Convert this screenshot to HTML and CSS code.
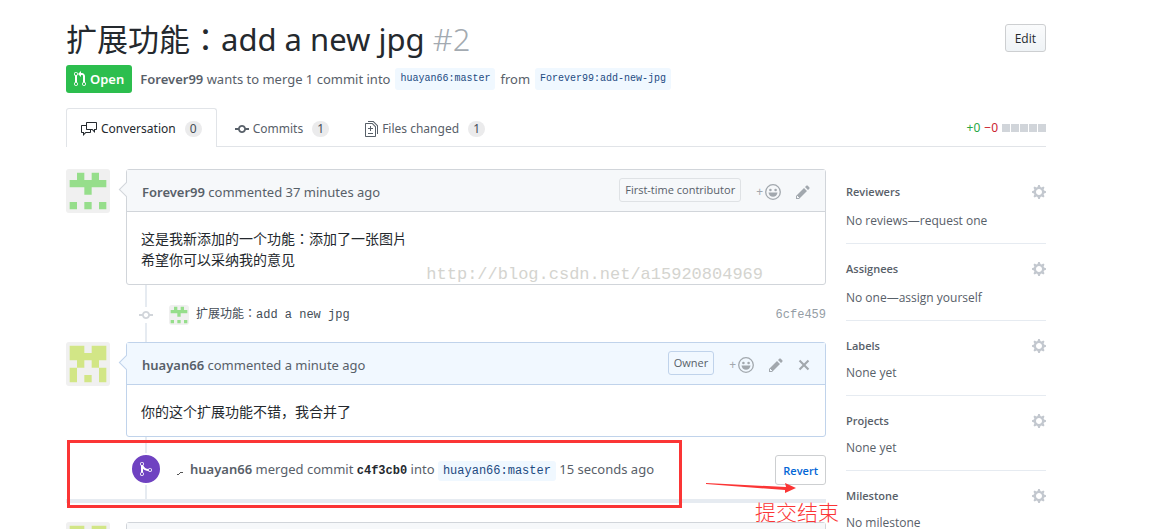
FILE: index.html
```html
<!DOCTYPE html>
<html lang="en">
<head>
  <meta charset="UTF-8">
  <title>扩展功能：add a new jpg #2</title>
  <link rel="stylesheet" href="styles.css">
</head>
<body>

<!-- Icons and avatars used more than once -->
<svg class="sprite" aria-hidden="true">
  <symbol id="commit" viewBox="0 0 14 16"><path d="M10.86 7c-.45-1.72-2-3-3.86-3-1.86 0-3.41 1.28-3.86 3H0v2h3.14c.45 1.72 2 3 3.86 3 1.86 0 3.41-1.28 3.86-3H14V7h-3.14zM7 10.2c-1.22 0-2.2-.98-2.2-2.2 0-1.22.98-2.2 2.2-2.2 1.22 0 2.2.98 2.2 2.2 0 1.22-.98 2.2-2.2 2.2z"/></symbol>
  <symbol id="pencil" viewBox="0 0 14 16"><path d="M0 12v3h3l8-8-3-3-8 8zm3 2H1v-2h1v1h1v1zm10.3-9.3L12 6 9 3l1.3-1.3a.996.996 0 0 1 1.41 0l1.59 1.59c.39.39.39 1.02 0 1.41z"/></symbol>
  <symbol id="smiley" viewBox="0 0 16 16"><circle cx="8" cy="8" r="7.3" fill="none" stroke="currentColor" stroke-width="1.3"/><circle cx="5.4" cy="6" r="1.3"/><circle cx="10.6" cy="6" r="1.3"/><path d="M3.5 8.5h9c-.3 2.7-2.1 4.3-4.5 4.3s-4.2-1.6-4.5-4.3z"/></symbol>
  <symbol id="gear" viewBox="0 0 14 16"><path d="M14 8.77v-1.6l-1.94-.64-.45-1.09.88-1.84-1.13-1.13-1.81.91-1.09-.45-.69-1.92h-1.6l-.63 1.94-1.11.45-1.84-.88-1.13 1.13.91 1.81-.45 1.09L0 7.23v1.59l1.94.64.45 1.09-.88 1.84 1.13 1.13 1.81-.91 1.09.45.69 1.92h1.59l.63-1.94 1.11-.45 1.84.88 1.13-1.13-.92-1.81.47-1.09L14 8.75v.02zM7 11c-1.66 0-3-1.34-3-3s1.34-3 3-3 3 1.34 3 3-1.34 3-3 3z"/></symbol>
  <symbol id="avatar-forever" viewBox="0 0 12 12"><path fill="#f0f0f0" d="M0 0h12v12H0z"/><path fill="#96de8b" d="M3 1h2v2h2V1h2v2h2v2H7v2H5V5H1V3h2zM1 9h2v2H1zM5 9h2v2H5zM9 9h2v2H9z"/></symbol>
  <symbol id="avatar-huayan" viewBox="0 0 12 12"><path fill="#f0f0f0" d="M0 0h12v12H0z"/><path fill="#d2e686" d="M1 1h4v2h2V1h4v4H9v2H7V5H5v2H3V5H1zM1 7h2v4H1zM9 7h2v4H9zM5 9h2v2H5z"/></symbol>
</svg>

<div class="page">
  <header class="pr-header">
    <div class="title-row">
      <h1>扩展功能：add a new jpg <span class="number">#2</span></h1>
      <button class="btn btn-edit" type="button">Edit</button>
    </div>
    <div class="meta">
      <span class="state">
        <svg width="12" height="16" viewBox="0 0 12 16"><path d="M11 11.28V5c-.03-.78-.34-1.47-.94-2.06C9.46 2.35 8.78 2.03 8 2H7V0L4 3l3 3V4h1c.27.02.48.11.69.31.21.2.3.42.31.69v6.28A1.993 1.993 0 0 0 10 15a1.993 1.993 0 0 0 1-3.72zm-1 2.92c-.66 0-1.2-.55-1.2-1.2 0-.65.55-1.2 1.2-1.2.65 0 1.2.55 1.2 1.2 0 .65-.55 1.2-1.2 1.2zM4 3c0-1.11-.89-2-2-2a1.993 1.993 0 0 0-1 3.72v6.56A1.993 1.993 0 0 0 2 15a1.993 1.993 0 0 0 1-3.72V4.72c.59-.34 1-.98 1-1.72zm-.8 10c0 .66-.55 1.2-1.2 1.2-.65 0-1.2-.55-1.2-1.2 0-.65.55-1.2 1.2-1.2.65 0 1.2.55 1.2 1.2zM2 4.2C1.34 4.2.8 3.65.8 3c0-.65.55-1.2 1.2-1.2.65 0 1.2.55 1.2 1.2 0 .65-.55 1.2-1.2 1.2z"/></svg>
        Open
      </span>
      <span><a class="author" href="#">Forever99</a> wants to merge 1 commit into</span>
      <a class="branch" href="#">huayan66:master</a>
      <span>from</span>
      <a class="branch" href="#">Forever99:add-new-jpg</a>
    </div>
  </header>

  <nav class="tabs">
    <a class="tab selected" href="#">
      <svg width="16" height="16" viewBox="0 0 16 16"><path d="M15 1H6c-.55 0-1 .45-1 1v2H1c-.55 0-1 .45-1 1v6c0 .55.45 1 1 1h1v3l3-3h4c.55 0 1-.45 1-1V9h1l3 3V9h1c.55 0 1-.45 1-1V2c0-.55-.45-1-1-1zM9 11H4.5L3 12.500V11H1V5h4v3c0 .55.45 1 1 1h3v2zm6-3h-2v1.500L11.500 8H6V2h9v6z"/></svg>
      Conversation <span class="counter">0</span>
    </a>
    <a class="tab" href="#">
      <svg width="14" height="16"><use href="#commit"/></svg>
      Commits <span class="counter">1</span>
    </a>
    <a class="tab" href="#">
      <svg width="13" height="16" viewBox="0 0 13 16"><path d="M6 7h2v1H6v2H5V8H3V7h2V5h1v2zm-3 6h5v-1H3v1zM7.5 2L11 5.500V15c0 .55-.45 1-1 1H1c-.55 0-1-.45-1-1V3c0-.55.45-1 1-1h6.500zM10 6L7 3H1v12h9V6zM8.500 0H3v1h5l4 4v8h1V4.500L8.500 0z"/></svg>
      Files changed <span class="counter">1</span>
    </a>
    <span class="diffstat">
      <span class="added">+0</span>
      <span class="deleted">−0</span>
      <span class="blocks"><i></i><i></i><i></i><i></i><i></i></span>
    </span>
  </nav>

  <div class="columns">
    <main class="discussion">
      <article class="entry">
        <svg class="avatar" width="44" height="44"><use href="#avatar-forever"/></svg>
        <div class="comment">
          <div class="comment-header">
            <p><a class="author" href="#">Forever99</a> commented 37 minutes ago</p>
            <span class="role">First-time contributor</span>
            <button class="icon-btn" type="button" aria-label="Add reaction"><span class="plus">+</span><svg width="16" height="16"><use href="#smiley"/></svg></button>
            <button class="icon-btn" type="button" aria-label="Edit comment"><svg width="14" height="16"><use href="#pencil"/></svg></button>
          </div>
          <div class="comment-body">这是我新添加的一个功能：添加了一张图片<br>希望你可以采纳我的意见</div>
          <span class="watermark">http://blog.csdn.net/a15920804969</span>
        </div>
      </article>

      <div class="commit-row">
        <span class="commit-mark"><svg width="14" height="16"><use href="#commit"/></svg></span>
        <svg class="avatar" width="20" height="20"><use href="#avatar-forever"/></svg>
        <a class="commit-title" href="#">扩展功能：add a new jpg</a>
        <a class="sha" href="#">6cfe459</a>
      </div>

      <article class="entry">
        <svg class="avatar" width="44" height="44"><use href="#avatar-huayan"/></svg>
        <div class="comment own">
          <div class="comment-header">
            <p><a class="author" href="#">huayan66</a> commented a minute ago</p>
            <span class="role">Owner</span>
            <button class="icon-btn" type="button" aria-label="Add reaction"><span class="plus">+</span><svg width="16" height="16"><use href="#smiley"/></svg></button>
            <button class="icon-btn" type="button" aria-label="Edit comment"><svg width="14" height="16"><use href="#pencil"/></svg></button>
            <button class="icon-btn" type="button" aria-label="Delete comment"><svg width="12" height="16" viewBox="0 0 12 16"><path d="M7.48 8l3.75 3.75-1.48 1.48L6 9.48l-3.75 3.75-1.48-1.48L4.52 8 .77 4.25l1.48-1.48L6 6.52l3.75-3.75 1.48 1.48z"/></svg></button>
          </div>
          <div class="comment-body">你的这个扩展功能不错，我合并了</div>
        </div>
      </article>

      <div class="merge-row">
        <span class="merge-badge"><svg width="12" height="16" viewBox="0 0 12 16"><path d="M10 7c-.73 0-1.38.41-1.73 1.02V8C7.22 7.98 6 7.64 5.14 6.98c-.75-.58-1.5-1.61-1.89-2.44A1.993 1.993 0 0 0 2 .99C.89.99 0 1.89 0 3a2 2 0 0 0 1 1.72v6.56c-.59.35-1 .99-1 1.72 0 1.11.89 2 2 2a1.993 1.993 0 0 0 1-3.72V7.67c.67.7 1.44 1.27 2.3 1.69.86.42 2.03.63 2.97.64v-.02c.36.61 1 1.02 1.73 1.02 1.11 0 2-.89 2-2 0-1.11-.89-2-2-2zm-6.8 6c0 .66-.55 1.2-1.2 1.2-.65 0-1.2-.55-1.2-1.2 0-.65.55-1.2 1.2-1.2.65 0 1.2.55 1.2 1.2zM2 4.2C1.34 4.2.8 3.65.8 3c0-.65.55-1.2 1.2-1.2.65 0 1.2.55 1.2 1.2 0 .65-.55 1.2-1.2 1.2zm8 6c-.66 0-1.2-.55-1.2-1.2 0-.65.55-1.2 1.2-1.2.65 0 1.2.55 1.2 1.2 0 .65-.55 1.2-1.2 1.2z"/></svg></span>
        <svg class="scribble" width="6" height="20" viewBox="0 0 6 20"><path d="M0 14.500h2M2 13.500h1M3 12.500h3" stroke="#555" fill="none"/></svg>
        <p><a class="author" href="#">huayan66</a> merged commit <a class="merge-sha" href="#">c4f3cb0</a> into <a class="branch" href="#">huayan66:master</a> 15 seconds ago</p>
        <button class="btn btn-revert" type="button">Revert</button>

        <!-- Annotations over the merge event -->
        <div class="highlight"></div>
        <svg class="arrow" width="90" height="12" viewBox="0 0 90 12"><path fill="#fb3535" d="M0 0l80 4-1-4 11 5-11 5v-3L0 1z"/></svg>
        <span class="note">提交结束</span>
      </div>

      <article class="entry">
        <svg class="avatar" width="44" height="44"><use href="#avatar-huayan"/></svg>
        <div class="comment"><div class="comment-header"></div></div>
      </article>
    </main>

    <aside class="sidebar">
      <section>
        <h2>Reviewers <button class="icon-btn" type="button" aria-label="Edit reviewers"><svg width="14" height="16"><use href="#gear"/></svg></button></h2>
        <p>No reviews—<a href="#">request one</a></p>
      </section>
      <section>
        <h2>Assignees <button class="icon-btn" type="button" aria-label="Edit assignees"><svg width="14" height="16"><use href="#gear"/></svg></button></h2>
        <p>No one—<a href="#">assign yourself</a></p>
      </section>
      <section class="short">
        <h2>Labels <button class="icon-btn" type="button" aria-label="Edit labels"><svg width="14" height="16"><use href="#gear"/></svg></button></h2>
        <p>None yet</p>
      </section>
      <section class="short">
        <h2>Projects <button class="icon-btn" type="button" aria-label="Edit projects"><svg width="14" height="16"><use href="#gear"/></svg></button></h2>
        <p>None yet</p>
      </section>
      <section class="short">
        <h2>Milestone <button class="icon-btn" type="button" aria-label="Edit milestone"><svg width="14" height="16"><use href="#gear"/></svg></button></h2>
        <p>No milestone</p>
      </section>
    </aside>
  </div>
</div>

</body>
</html>
```
FILE: styles.css
```css
* {
  box-sizing: border-box;
}

html {
  height: 100%;
  overflow: hidden;
}

body {
  height: 100%;
  margin: 0;
  overflow-y: auto;
  scrollbar-width: none;
  background: #fff;
  color: #24292e;
  font-family: "Noto Sans", "Noto Sans CJK TC", sans-serif;
  font-size: 13px;
  line-height: 20px;
}

a {
  color: inherit;
  text-decoration: none;
}

p {
  margin: 0;
}

svg {
  fill: currentColor;
  flex: none;
}

.sprite {
  position: absolute;
  width: 0;
  height: 0;
}

.page {
  padding: 18px 127px 0 66px;
}

/* Header */
.title-row {
  display: flex;
  justify-content: space-between;
  align-items: center;
  height: 40px;
}

h1 {
  margin: 0;
  padding-top: 2px;
  font-size: 31px;
  font-weight: 400;
  line-height: 40px;
}

.number {
  color: #a3aab1;
  font-weight: 300;
}

.btn {
  height: 30px;
  padding: 0 8px;
  border: 1px solid #cdcfd1;
  border-radius: 3px;
  background: #fff;
  font-family: "Open Sans", sans-serif;
  font-size: 12px;
  font-weight: 600;
}

.btn-edit {
  height: 28px;
  padding: 0 9px;
  background: linear-gradient(#fafbfc, #eff3f6);
  color: #24292e;
  font-weight: 500;
}

.btn-revert {
  margin-left: auto;
  padding: 0 7px;
  color: #0366d6;
  font-size: 11px;
}

.meta {
  display: flex;
  align-items: center;
  gap: 5px;
  margin-top: 7px;
  color: #586069;
}

.state {
  display: flex;
  align-items: center;
  gap: 4px;
  height: 28px;
  margin-right: 3px;
  padding: 0 8px;
  border-radius: 3px;
  background: #2cbe4e;
  color: #fff;
  font-weight: 600;
}

.author {
  color: #586069;
  font-weight: 600;
}

.branch {
  padding: 3px 5px;
  border-radius: 3px;
  background: #f0f8ff;
  color: #1c4a82;
  font-family: "Liberation Mono", monospace;
  font-size: 10px;
  line-height: 16px;
}

/* Tabs */
.tabs {
  display: flex;
  align-items: flex-end;
  margin-top: 15px;
  border-bottom: 1px solid #e1e4e8;
}

.tab {
  display: flex;
  align-items: center;
  gap: 4px;
  height: 39px;
  margin-bottom: -1px;
  padding: 2px 14px 0;
  border: 1px solid transparent;
  border-bottom: 0;
  color: #586069;
  font-size: 12px;
}

.tab + .tab {
  padding: 2px 17px 0;
}

.tab.selected {
  border-color: #e1e4e8;
  border-radius: 3px 3px 0 0;
  background: #fff;
  color: #24292e;
}

.counter {
  min-width: 17px;
  height: 16px;
  margin-left: 5px;
  border-radius: 8px;
  background: #ebebec;
  color: #444d56;
  font-size: 12px;
  line-height: 16px;
  text-align: center;
}

.diffstat {
  display: flex;
  align-items: center;
  gap: 4px;
  margin-left: auto;
  padding-bottom: 8px;
  font-size: 12px;
}

.added {
  color: #28a745;
}

.deleted {
  color: #cb2431;
}

.blocks {
  display: flex;
  gap: 1px;
}

.blocks i {
  width: 8px;
  height: 8px;
  background: #d1d5da;
}

/* Discussion */
.columns {
  display: grid;
  grid-template-columns: 1fr 200px;
  gap: 20px;
  margin-top: 22px;
}

.entry {
  display: flex;
  align-items: flex-start;
  gap: 16px;
}

.avatar {
  border-radius: 3px;
}

.comment {
  position: relative;
  flex: 1;
  border: 1px solid #d1d5da;
  border-radius: 3px;
}

.comment::before {
  content: "";
  position: absolute;
  top: 14px;
  left: -6px;
  width: 10px;
  height: 10px;
  border: 1px solid #d1d5da;
  border-top: 0;
  border-right: 0;
  background: #f6f8fa;
  transform: rotate(45deg);
}

.comment-header {
  position: relative;
  display: flex;
  align-items: center;
  gap: 15px;
  height: 42px;
  padding: 2px 15px 0;
  border-bottom: 1px solid #d1d5da;
  background: #f6f8fa;
  color: #586069;
}

.comment-header p {
  flex: 1;
}

.role {
  height: 24px;
  margin-bottom: 4px;
  padding: 0 5px;
  border: 1px solid #dfe2e5;
  border-radius: 3px;
  font-family: "Open Sans", sans-serif;
  font-size: 11px;
  line-height: 22px;
}

.own,
.own::before,
.own .comment-header {
  border-color: #c0d3eb;
}

.own::before,
.own .comment-header {
  background: #f1f8ff;
}

.own .role {
  border-color: #c0d3eb;
}

.icon-btn {
  display: flex;
  align-items: center;
  gap: 2px;
  padding: 0;
  border: 0;
  background: none;
  color: #a2a8ae;
  font-family: inherit;
}

.plus {
  font-size: 12px;
}

.comment-body {
  padding: 16px 14px 14px;
  font-size: 14px;
  line-height: 21px;
}

.own .comment-body {
  font-family: "Noto Sans CJK SC", sans-serif;
}

.watermark {
  position: absolute;
  right: 62px;
  bottom: 0;
  color: #d4d4cf;
  font-family: "Liberation Mono", monospace;
  font-size: 17px;
  line-height: 18px;
}

.commit-row {
  display: flex;
  align-items: center;
  height: 57px;
  padding: 3px 0 0 66px;
  background: linear-gradient(#e6ebf1, #e6ebf1) 79px 0 / 2px 100% no-repeat;
  font-family: "Liberation Mono", "Noto Sans CJK TC", monospace;
  font-size: 12px;
}

.commit-mark {
  display: flex;
  margin-right: 9px;
  padding: 0 7px;
  background: #fff;
  color: #d1d5da;
}

.commit-row .avatar {
  margin-right: 7px;
}

.commit-title {
  flex: 1;
  color: #444d56;
}

.sha {
  color: #959da5;
}

.merge-row {
  position: relative;
  display: flex;
  align-items: center;
  height: 66px;
  margin-bottom: 19px;
  padding: 4px 0 0 64px;
  border-bottom: 4px solid #e6ebf1;
  background: linear-gradient(#e6ebf1, #e6ebf1) 79px 0 / 2px 100% no-repeat;
  color: #586069;
}

.merge-badge {
  display: flex;
  align-items: center;
  justify-content: center;
  width: 32px;
  height: 32px;
  margin: 0 15px 2px 0;
  border: 2px solid #fff;
  border-radius: 50%;
  background: #6f42c1;
  color: #fff;
}

.scribble {
  margin-right: 7px;
}

.merge-row .branch {
  font-size: 12px;
}

.merge-sha {
  color: #24292e;
  font-family: "Liberation Mono", monospace;
  font-size: 12px;
  font-weight: 700;
}

/* Annotations */
.highlight {
  position: absolute;
  top: 3px;
  left: 1px;
  width: 615px;
  height: 68px;
  border: 3px solid #fb3535;
}

.arrow {
  position: absolute;
  top: 46px;
  right: 30px;
}

.note {
  position: absolute;
  top: 60px;
  right: -13px;
  z-index: 1;
  color: #fb3535;
  font-family: "Noto Sans CJK SC", sans-serif;
  font-size: 21px;
  font-weight: 300;
  line-height: 28px;
}

/* Sidebar */
.sidebar {
  color: #586069;
  font-family: "Open Sans", sans-serif;
  font-size: 12px;
  line-height: 18px;
}

.sidebar section {
  padding: 16px 0 13px;
  border-bottom: 1px solid #e6ebf1;
}

.sidebar section:first-child {
  padding-top: 14px;
}

.sidebar h2 {
  display: flex;
  justify-content: space-between;
  margin: 0 0 11px;
  font-size: 11px;
  font-weight: 600;
}

.sidebar .short h2 {
  margin-bottom: 9px;
}

.sidebar .icon-btn {
  color: #c3c8cf;
}
```
